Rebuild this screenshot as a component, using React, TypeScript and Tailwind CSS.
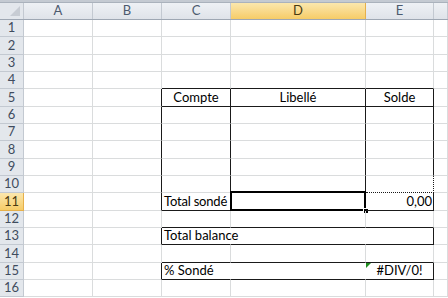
import React from "react";

const cols = [
  { key: "A", w: "w-[69px]" },
  { key: "B", w: "w-[69px]" },
  { key: "C", w: "w-[69px]" },
  { key: "D", w: "w-[135px]" },
  { key: "E", w: "w-[68px]" },
  { key: "F", w: "flex-1" },
];

const heights = [17, 18, 17, 17, 18, 17, 17, 18, 17, 17, 18, 17, 17, 18, 17, 17];

// right border colour of each cell
const rightBorder = (row: number, col: string) => {
  if (col === "B" && row >= 5 && row <= 15 && row !== 12 && row !== 14) return "border-r-[#1a1a1a]";
  if (row >= 5 && row <= 11 && (col === "C" || col === "D" || col === "E")) return "border-r-[#1a1a1a]";
  if ((row === 13 || row === 15) && col === "E") return "border-r-[#1a1a1a]";
  if ((row === 13 || row === 15) && (col === "C" || col === "D")) return "border-r-white";
  return "border-r-[#dadcdd]";
};

// bottom border of each cell
const bottomBorder = (row: number, col: string) => {
  const inTable = col === "C" || col === "D" || col === "E";
  if (!inTable) return "border-b-[#dadcdd]";
  if ([4, 5, 11, 12, 13, 14, 15].includes(row)) return "border-b-[#1a1a1a]";
  if (row === 10 && col === "E") return "border-b-[#1a1a1a] border-dotted";
  return "border-b-[#dadcdd]";
};

const cellText: Record<string, React.ReactNode> = {
  "5C": <span className="w-full text-center">Compte</span>,
  "5D": <span className="w-full text-center">Libellé</span>,
  "5E": <span className="w-full text-center">Solde</span>,
  "11C": <span className="relative z-10 pl-[2px] whitespace-nowrap tracking-[-0.2px]">Total sondé</span>,
  "11E": <span className="w-full text-right pr-[1px]">0,00</span>,
  "13C": <span className="pl-[2px] whitespace-nowrap">Total balance</span>,
  "15C": <span className="pl-[2px] whitespace-nowrap">% Sondé</span>,
  "15E": <span className="w-full text-center">#DIV/0!</span>,
};

const App = () => {
  return (
    <div
      className="w-[448px] h-[298px] overflow-hidden bg-white text-black"
      style={{ fontFamily: "Lato, 'Liberation Sans', sans-serif" }}
    >
      {/* top strip */}
      <div className="h-[3px] bg-[#c4cad2] border-b border-[#aab2bc]" />

      {/* column headers */}
      <div className="flex h-[17px] border-b border-[#9ea7b3]">
        <div className="relative w-[24px] shrink-0 bg-[#e3e7ec] border-r border-[#c3c9d1]">
          <div className="absolute right-[3px] bottom-[3px] w-0 h-0 border-l-[10px] border-l-transparent border-b-[10px] border-b-[#c7ccd3]" />
        </div>
        {cols.map((c) => (
          <div
            key={c.key}
            className={
              c.w +
              " shrink-0 flex items-center justify-center text-[13px] border-r " +
              (c.key === "D"
                ? "bg-gradient-to-b from-[#fbe7ad] to-[#f6cc66] border-[#e6b04a] text-[#4a3a10]"
                : "bg-gradient-to-b from-[#eef1f5] to-[#dfe3e9] border-[#c3c9d1] text-[#4c5a6e]")
            }
          >
            {c.key === "F" ? "" : c.key}
          </div>
        ))}
      </div>

      {/* rows */}
      {heights.map((h, i) => {
        const row = i + 1;
        return (
          <div key={row} className="flex" style={{ height: h }}>
            <div
              className={
                "w-[24px] shrink-0 flex items-center justify-center text-[13px] border-r border-b " +
                (row === 11
                  ? "bg-gradient-to-b from-[#fbe7ad] to-[#f6cc66] border-[#e6b04a] text-[#4a3a10]"
                  : "bg-[#e3e7ec] border-[#c3c9d1] text-[#3f4c5e]")
              }
            >
              {row}
            </div>
            {cols.map((c) => {
              const id = `${row}${c.key}`;
              return (
                <div
                  key={c.key}
                  className={
                    c.w +
                    " shrink-0 relative flex items-end pb-[1px] text-[13px] leading-[15px] border-r border-b " +
                    rightBorder(row, c.key) +
                    " " +
                    bottomBorder(row, c.key)
                  }
                >
                  {cellText[id]}
                  {id === "11D" && (
                    <>
                      <div className="absolute -left-[1px] -top-[2px] -right-[1px] -bottom-[1px] border-2 border-black" />
                      <div className="absolute -right-[4px] -bottom-[4px] w-[6px] h-[6px] bg-black border border-white" />
                    </>
                  )}
                  {id === "15E" && (
                    <div className="absolute left-0 top-0 w-0 h-0 border-t-[5px] border-t-[#1e8c1e] border-r-[5px] border-r-transparent" />
                  )}
                </div>
              );
            })}
          </div>
        );
      })}
    </div>
  );
};

export default App;
